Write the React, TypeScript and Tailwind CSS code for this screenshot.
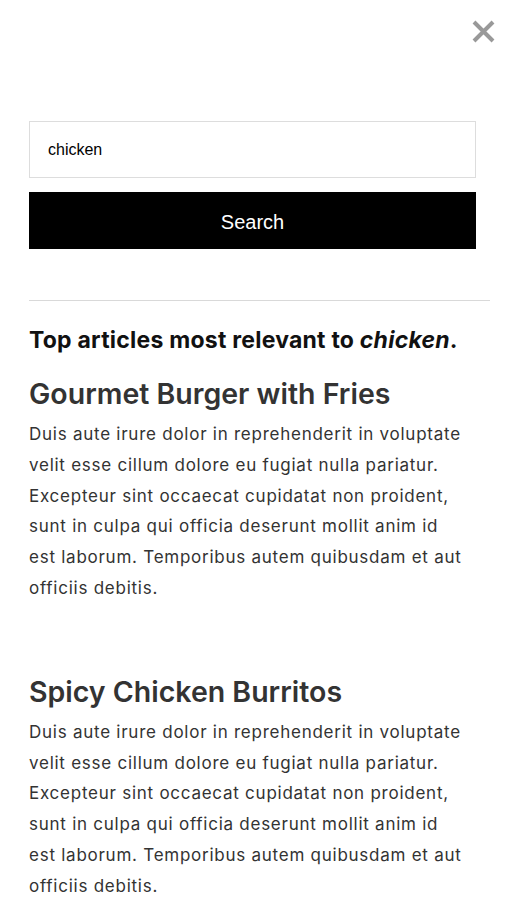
export default function App() {
  const articles = [
    { title: 'Gourmet Burger with Fries' },
    { title: 'Spicy Chicken Burritos' },
  ];
  const body =
    'Duis aute irure dolor in reprehenderit in voluptate velit esse cillum dolore eu fugiat nulla pariatur. Excepteur sint occaecat cupidatat non proident, sunt in culpa qui officia deserunt mollit anim id est laborum. Temporibus autem quibusdam et aut officiis debitis.';

  return (
    <div className="min-h-screen bg-white relative overflow-hidden">
      <button className="absolute right-[11px] top-[20px] w-[23px] h-[23px] text-[#999]" aria-label="Close">
        <svg viewBox="0 0 23 23" className="w-full h-full" fill="none" stroke="currentColor" strokeWidth="4">
          <path d="M2 2 L21 21 M21 2 L2 21" />
        </svg>
      </button>

      <div className="pl-[29px] pr-[16px] pt-[121px]">
        <div className="pr-[14px]">
          <input
            defaultValue="chicken"
            className="w-full h-[57px] border border-[#ddd] px-[18px] text-[16px] text-black outline-none font-['Liberation_Sans',Arial,sans-serif]"
          />
          <button className="mt-[14px] w-full h-[57px] pt-[2px] bg-black text-white text-[20px] font-['Liberation_Sans',Arial,sans-serif]">
            Search
          </button>
        </div>

        <div className="mt-[51px] border-t border-[#d9d9d9]" />

        <div className="font-['Inter',sans-serif] pr-[14px]">
          <h2 className="mt-[24px] text-[23px] font-bold text-[#111] tracking-[0.01em] leading-[30px]">
            Top articles most relevant to <em>chicken</em>.
          </h2>

          {articles.map((a, i) => (
            <article key={a.title} className={i === 0 ? 'mt-[21px]' : 'mt-[70px]'}>
              <h3 className="text-[28.5px] font-semibold text-[#333] leading-[36px]">{a.title}</h3>
              <p className="mt-[7px] max-w-[436px] text-[17px] text-[#333] leading-[30.8px] tracking-[0.044em]">{body}</p>
            </article>
          ))}
        </div>
      </div>
    </div>
  );
}
